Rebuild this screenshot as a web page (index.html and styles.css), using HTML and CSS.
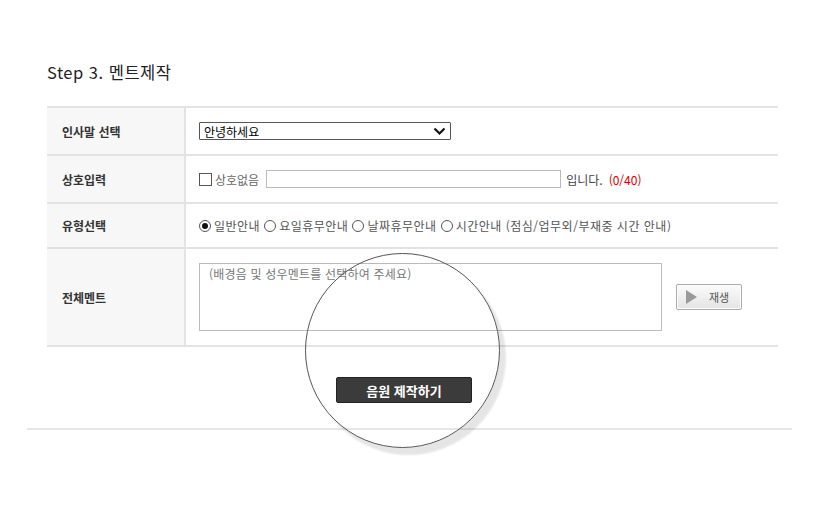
FILE: index.html
```html
<!DOCTYPE html>
<html lang="ko">
<head>
  <meta charset="UTF-8">
  <meta name="viewport" content="width=device-width, initial-scale=1.0">
  <title>멘트제작</title>
  <link rel="stylesheet" href="styles.css">
</head>
<body>
  <div class="page">
    <div class="content">
      <h2 class="step-title">Step 3. 멘트제작</h2>

      <div class="form-table">
        <div class="label">인사말 선택</div>
        <div class="field">
          <div class="select">
            <span>안녕하세요</span>
            <svg width="13" height="9" viewBox="0 0 13 9"><path d="M1.5 1.5 L6.5 6.5 L11.5 1.5" fill="none" stroke="#111" stroke-width="2.2"/></svg>
          </div>
        </div>

        <div class="label">상호입력</div>
        <div class="field">
          <label class="check"><span class="box"></span>상호없음</label>
          <input type="text" class="text-input">
          <span class="suffix">입니다.</span>
          <span class="count">(0/40)</span>
        </div>

        <div class="label">유형선택</div>
        <div class="field radios">
          <label class="radio"><span class="dot on"></span>일반안내</label>
          <label class="radio"><span class="dot"></span>요일휴무안내</label>
          <label class="radio"><span class="dot"></span>날짜휴무안내</label>
          <label class="radio"><span class="dot"></span>시간안내 (점심/업무외/부재중 시간 안내)</label>
        </div>

        <div class="label">전체멘트</div>
        <div class="field">
          <textarea class="ment" placeholder="(배경음 및 성우멘트를 선택하여 주세요)"></textarea>
          <button class="play-btn"><span class="tri"></span>재생</button>
        </div>
      </div>

      <div class="actions">
        <button class="make-btn">음원 제작하기</button>
      </div>
    </div>

    <div class="divider"></div>

    <!-- magnifier ring over the submit button -->
    <div class="magnifier"></div>
  </div>
</body>
</html>
```

FILE: styles.css
```css
body {
  margin: 0;
  font-family: "Noto Sans CJK KR", "Noto Sans", sans-serif;
  background-color: #fff;
  color: #333;
}

.page {
  position: relative;
  width: 818px;
  height: 528px;
  overflow: hidden;
}

.content {
  padding: 62px 40px 0 47px;
}

.step-title {
  margin: 0 0 24px;
  font-size: 16.5px;
  line-height: 20px;
  font-weight: normal;
  letter-spacing: 0.5px;
  color: #222;
}

.form-table {
  display: grid;
  grid-template-columns: 139px 592px;
  grid-template-rows: 48px 48px 45px 98px;
  border-top: 2px solid #e3e3e3;
}

.label,
.field {
  box-sizing: border-box;
  display: flex;
  align-items: center;
  border-bottom: 2px solid #e3e3e3;
  font-size: 12px;
}

.label {
  padding-left: 15px;
  background-color: #f7f7f7;
  border-right: 2px solid #e3e3e3;
  font-weight: bold;
  color: #333;
}

.field {
  padding-left: 13px;
  color: #555;
}

.select {
  box-sizing: border-box;
  width: 252px;
  height: 18px;
  border: 1px solid #555;
  border-radius: 1px;
  padding: 0 4px 0 4px;
  display: flex;
  align-items: center;
  justify-content: space-between;
  color: #000;
}

.check {
  display: flex;
  align-items: center;
  gap: 3px;
  margin-right: 7px;
  color: #666;
}

.box {
  box-sizing: border-box;
  width: 13px;
  height: 13px;
  border: 1px solid #555;
  background: #fff;
}

.text-input {
  box-sizing: border-box;
  width: 295px;
  height: 18px;
  border: 1px solid #bbb;
  margin: 0 5px 0 0;
  padding: 0;
}

.suffix {
  color: #444;
  margin-right: 6px;
}

.count {
  color: #d40000;
}

.radios {
  gap: 4px;
  letter-spacing: 0.5px;
}

.radio {
  display: flex;
  align-items: center;
  gap: 3px;
}

.dot {
  box-sizing: border-box;
  width: 12px;
  height: 12px;
  border: 1px solid #555;
  border-radius: 50%;
  background: #fff;
  display: flex;
  align-items: center;
  justify-content: center;
}

.dot.on::after {
  content: "";
  width: 6px;
  height: 6px;
  border-radius: 50%;
  background: #111;
}

.ment {
  box-sizing: border-box;
  width: 463px;
  height: 68px;
  border: 1px solid #bbb;
  padding: 2px 9px;
  margin: 0;
  resize: none;
  font-family: inherit;
  font-size: 12px;
  line-height: 16px;
  letter-spacing: 0.2px;
}

.ment::placeholder {
  color: #777;
}

.play-btn {
  box-sizing: border-box;
  width: 66px;
  height: 26px;
  margin-left: 14px;
  padding: 0 0 0 9px;
  border: 1px solid #aaa;
  border-radius: 2px;
  background: linear-gradient(#fbfbfb, #e4e4e4);
  box-shadow: inset 0 0 0 1px #fff;
  display: flex;
  align-items: center;
  gap: 12px;
  font-family: inherit;
  font-size: 11px;
  color: #555;
}

.tri {
  width: 0;
  height: 0;
  border-top: 7px solid transparent;
  border-bottom: 7px solid transparent;
  border-left: 11px solid #9a9a9a;
}

.actions {
  display: flex;
  padding-left: 289px;
  margin-top: 30px;
}

.make-btn {
  box-sizing: border-box;
  width: 136px;
  height: 26px;
  border: 1px solid #222;
  border-radius: 2px;
  background-color: #3b3b3b;
  color: #fff;
  font-family: inherit;
  font-size: 13px;
  font-weight: bold;
}

.divider {
  margin: 25px 26px 0 27px;
  height: 2px;
  background-color: #e6e6e6;
}

.magnifier {
  position: absolute;
  left: 305px;
  top: 253px;
  width: 195px;
  height: 195px;
  box-sizing: border-box;
  border: 1.5px solid #555;
  border-radius: 50%;
  box-shadow: 6px 7px 2px rgba(0, 0, 0, 0.1);
}
```
